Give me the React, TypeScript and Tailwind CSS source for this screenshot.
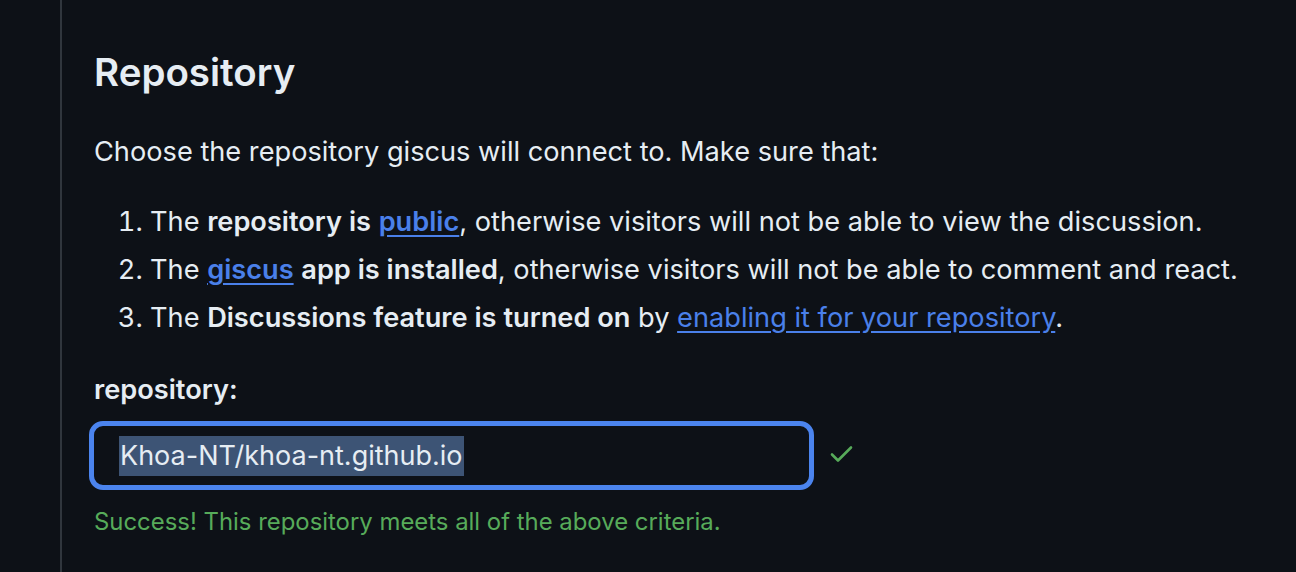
import React from "react";

const font = { fontFamily: "Inter, 'Noto Sans', sans-serif" };

function Check() {
  return (
    <svg width="28" height="28" viewBox="0 0 28 28" fill="none" className="shrink-0">
      <path d="M4 12.5 L10 18.5 L23 5.5" stroke="#57ab5a" strokeWidth="2.6" strokeLinecap="round" strokeLinejoin="round" />
    </svg>
  );
}

export default function App() {
  return (
    <div className="min-h-screen w-full bg-[#0d1117] text-[#e6edf3]" style={font}>
      <div className="ml-[60px] min-h-[572px] border-l-2 border-[#30363d] pl-[32px] pt-[50px]">
        <h2 className="text-[38.5px] font-semibold leading-[45px]">Repository</h2>

        <p className="mt-[39px] text-[27.2px] leading-[36px]">
          Choose the repository giscus will connect to. Make sure that:
        </p>

        <ol className="mt-[28px] list-decimal pl-[56px] text-[27.2px] leading-[48px]">
          <li>
            The <strong className="font-semibold">repository is</strong>{" "}
            <a className="font-semibold text-[#4a80ea] underline underline-offset-[4px]" href="#">public</a>, otherwise visitors will
            not be able to view the discussion.
          </li>
          <li>
            The <a className="font-semibold text-[#4a80ea] underline underline-offset-[4px]" href="#">giscus</a>{" "}
            <strong className="font-semibold">app is installed</strong>, otherwise visitors will not be able to comment and react.
          </li>
          <li>
            The <strong className="font-semibold">Discussions feature is turned on</strong> by{" "}
            <a className="text-[#4a80ea] underline underline-offset-[4px]" href="#">enabling it for your repository</a>.
          </li>
        </ol>

        <div className="mt-[30px] text-[27.2px] font-semibold leading-[36px]">repository:</div>

        <div className="mt-[13px] -ml-[5px] flex items-center gap-[14px]">
          <div className="flex h-[69px] w-[725px] items-center rounded-[14px] border-[5px] border-[#4b84ee] pl-[25px]">
            <span className="bg-[#3d5475] px-px text-[27px] leading-[40px] text-[#e6edf3]">Khoa-NT/khoa-nt.github.io</span>
          </div>
          <Check />
        </div>

        <p className="mt-[17px] text-[23.9px] leading-[30px] text-[#57ab5a]">
          Success! This repository meets all of the above criteria.
        </p>
      </div>
    </div>
  );
}
